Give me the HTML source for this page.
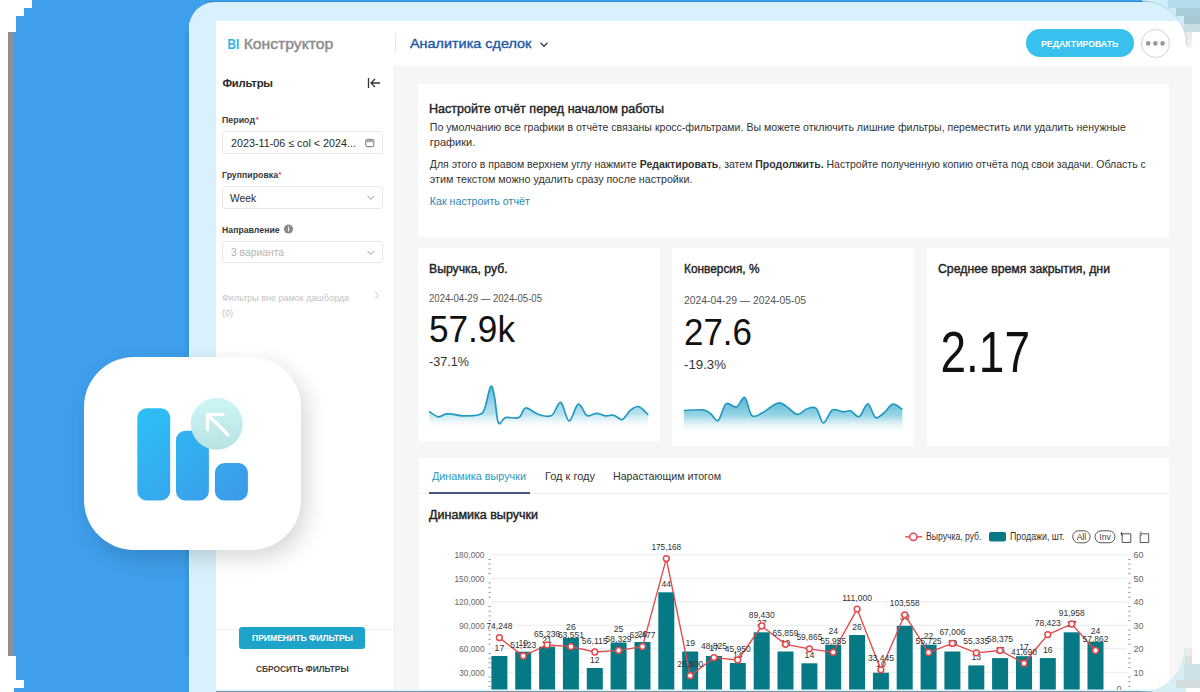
<!DOCTYPE html>
<html><head><meta charset="utf-8"><style>
html,body{margin:0;padding:0;}
body{width:1200px;height:692px;position:relative;overflow:hidden;font-family:"Liberation Sans", sans-serif;}
svg text{font-family:"Liberation Sans", sans-serif;}
</style></head><body>
<div style="position:absolute;left:0px;top:0px;width:1200px;height:692px;background:#ffffff;"></div><div style="position:absolute;left:14px;top:32px;width:176px;height:660px;background:#3f9fec;"></div><div style="position:absolute;left:16px;top:16px;width:174px;height:16px;background:#3f9fec;"></div><div style="position:absolute;left:24px;top:8px;width:166px;height:8px;background:#3f9fec;"></div><div style="position:absolute;left:32px;top:0px;width:158px;height:8px;background:#3f9fec;"></div><div style="position:absolute;left:150px;top:0px;width:120px;height:60px;background:#3f9fec;"></div><div style="position:absolute;left:32px;top:0px;width:1118px;height:2px;background:#3f9fec;"></div><div style="position:absolute;left:205px;top:0.5px;width:945px;height:1.5px;background:#2f8fd0;"></div><div style="position:absolute;left:183px;top:32px;width:6px;height:660px;background:linear-gradient(90deg, rgba(47,143,208,0) , rgba(47,143,208,0.6));"></div><div style="position:absolute;left:8px;top:32px;width:6px;height:624px;background:#8f8f93;"></div><div style="position:absolute;left:0px;top:656px;width:16px;height:24px;background:#ffffff;"></div><div style="position:absolute;left:0px;top:680px;width:24px;height:8px;background:#ffffff;"></div><div style="position:absolute;left:14px;top:688px;width:176px;height:4px;background:#3f9fec;"></div><div style="position:absolute;left:16px;top:656px;width:174px;height:24px;background:#3f9fec;"></div><div style="position:absolute;left:24px;top:680px;width:166px;height:8px;background:#3f9fec;"></div><div id="win" style="position:absolute;left:189px;top:2px;width:1003px;height:690px;background:#d9f1fc;border-radius:26px 0 0 0;overflow:hidden;"><div style="position:absolute;left:0;top:0;width:1px;height:690px;background:#eefaff;"></div><div style="position:absolute;left:27px;top:19px;width:976px;height:671px;background:#ffffff;"></div><div style="position:absolute;left:206px;top:64px;width:797px;height:626px;background:#f6f6f6;"></div><div style="position:absolute;left:205px;top:64px;width:1.2px;height:626px;background:#ececec;"></div><div style="position:absolute;left:206px;top:31px;width:1px;height:20px;background:#e6e6e6;"></div><div style="position:absolute;left:229px;top:82px;width:751px;height:153px;background:#ffffff;"></div><div style="position:absolute;left:229px;top:246px;width:242px;height:193px;background:#ffffff;"></div><div style="position:absolute;left:483px;top:246px;width:242px;height:197.5px;background:#ffffff;"></div><div style="position:absolute;left:738px;top:246px;width:242px;height:198px;background:#ffffff;"></div><div style="position:absolute;left:230px;top:456px;width:750px;height:240px;background:#ffffff;"></div><div style="position:absolute;left:230px;top:491px;width:750px;height:1px;background:#efefef;"></div><div style="position:absolute;left:240px;top:489.7px;width:100.5px;height:2px;background:#4b5680;"></div><div style="position:absolute;left:33px;top:129px;width:161px;height:23px;background:#ffffff;box-sizing:border-box;border:1px solid #e8e8e8;border-radius:3px;"></div><div style="position:absolute;left:33px;top:184px;width:161px;height:23px;background:#ffffff;box-sizing:border-box;border:1px solid #e8e8e8;border-radius:3px;"></div><div style="position:absolute;left:33px;top:239px;width:161px;height:22px;background:#ffffff;box-sizing:border-box;border:1px solid #e8e8e8;border-radius:3px;"></div><div style="position:absolute;left:27px;top:627px;width:177px;height:1px;background:#f3f3f3;"></div><div style="position:absolute;left:50px;top:625px;width:126px;height:22px;background:#1ea4cb;border-radius:3px;"></div><div style="position:absolute;left:837px;top:27px;width:108px;height:28px;background:#38c1ee;border-radius:14px;"></div><div style="position:absolute;left:952px;top:27px;width:29px;height:29px;background:#ffffff;box-sizing:border-box;border:1px solid #d2d2d2;border-radius:50%;"></div><div style="position:absolute;left:27px;top:687px;width:976px;height:2px;background:#e8fbff;"></div><div style="position:absolute;left:27px;top:688.5px;width:976px;height:2px;background:#6d8ea2;"></div></div><div style="position:absolute;left:84px;top:357px;width:217px;height:193px;background:#fff;border-radius:50px;box-shadow:6px 8px 22px rgba(0,0,0,0.16);"></div>
<svg width="1200" height="692" viewBox="0 0 1200 692" style="position:absolute;left:0;top:0;">
<defs><linearGradient id="ib" gradientUnits="userSpaceOnUse" x1="150" y1="400" x2="235" y2="505"><stop offset="0" stop-color="#2cc0f5"/><stop offset="1" stop-color="#3b9ae9"/></linearGradient><linearGradient id="ic" x1="0" y1="0" x2="0" y2="1"><stop offset="0" stop-color="#cdf6f7"/><stop offset="1" stop-color="#b8e2e2"/></linearGradient></defs><rect x="137.3" y="408.2" width="32.9" height="92.4" rx="9.5" fill="url(#ib)"/><rect x="176" y="430.7" width="32.9" height="69.9" rx="9.5" fill="url(#ib)"/><rect x="214.9" y="463.1" width="33" height="37.5" rx="9.5" fill="url(#ib)"/><circle cx="216.7" cy="423.8" r="26" fill="url(#ic)"/><path d="M227.9 434.7 L208 414.8 M207.5 429.5 V414.3 H223" fill="none" stroke="#fff" stroke-width="3.3" stroke-linecap="round"/><text x="227.5" y="48.7" font-size="14" font-weight="700" fill="#2db1e8" textLength="11.7" lengthAdjust="spacingAndGlyphs" >BI</text><text x="243.7" y="48.7" font-size="14.5" font-weight="400" fill="#8d8d8d" textLength="89.6" lengthAdjust="spacingAndGlyphs"  stroke="#8d8d8d" stroke-width="0.45">Конструктор</text><text x="410" y="48.3" font-size="13" font-weight="400" fill="#1b57a2" textLength="121.3" lengthAdjust="spacingAndGlyphs"  stroke="#1b57a2" stroke-width="0.35">Аналитика сделок</text><path d="M540.5 42.6 L544 46.2 L547.5 42.6" fill="none" stroke="#333" stroke-width="1.3"/><text x="1041" y="46.6" font-size="8.8" font-weight="700" fill="#ffffff" textLength="77.4" lengthAdjust="spacing" >РЕДАКТИРОВАТЬ</text><circle cx="1148.2" cy="43.4" r="2.3" fill="#9a9a9a"/><circle cx="1155.4" cy="43.4" r="2.3" fill="#9a9a9a"/><circle cx="1162.6" cy="43.4" r="2.3" fill="#9a9a9a"/><text x="222.4" y="87.2" font-size="11.3" font-weight="700" fill="#2a2a2a" textLength="50.6" lengthAdjust="spacing" >Фильтры</text><path d="M368.5 78 V88 M371.5 83 H380 M375 79 L371 83 L375 87" fill="none" stroke="#333" stroke-width="1.3"/><text x="222" y="122.7" font-size="8.8" font-weight="700" fill="#383838" textLength="33" lengthAdjust="spacing" >Период</text><text x="256" y="122" font-size="7" font-weight="700" fill="#e0364f" >*</text><text x="231" y="147" font-size="11" font-weight="400" fill="#2a2a2a" textLength="125" lengthAdjust="spacingAndGlyphs" >2023-11-06 ≤ col &lt; 2024...</text><rect x="365.8" y="139.4" width="8" height="7.3" rx="1.3" fill="none" stroke="#666" stroke-width="0.95"/><rect x="366" y="139.6" width="7.6" height="2.6" fill="#aaa"/><text x="222" y="177.8" font-size="8.7" font-weight="700" fill="#383838" textLength="56" lengthAdjust="spacing" >Группировка</text><text x="278.5" y="177" font-size="7" font-weight="700" fill="#e0364f" >*</text><text x="230" y="201.8" font-size="11" font-weight="400" fill="#2a2a2a" textLength="26" lengthAdjust="spacingAndGlyphs" >Week</text><path d="M367.5 196 L370.8 199.3 L374.1 196" fill="none" stroke="#999" stroke-width="1"/><text x="222" y="232.5" font-size="8.7" font-weight="700" fill="#383838" textLength="57.6" lengthAdjust="spacing" >Направление</text><circle cx="288.5" cy="229" r="4.6" fill="#8a8a8a"/><rect x="288" y="228" width="1.1" height="3.4" fill="#fff"/><rect x="288" y="226.2" width="1.1" height="1.1" fill="#fff"/><text x="231" y="255.8" font-size="11" font-weight="400" fill="#b5b5b5" textLength="53" lengthAdjust="spacingAndGlyphs" >3 варианта</text><path d="M367.5 251 L370.8 254.3 L374.1 251" fill="none" stroke="#999" stroke-width="1"/><text x="222" y="300.8" font-size="9" font-weight="400" fill="#c4c4c4" textLength="127" lengthAdjust="spacingAndGlyphs" >Фильтры вне рамок дашборда</text><path d="M375 291.8 L378.5 295.3 L375 298.8" fill="none" stroke="#c4c4c4" stroke-width="1"/><text x="222" y="315.5" font-size="9" font-weight="400" fill="#c4c4c4" >(0)</text><text x="252" y="641.2" font-size="8.6" font-weight="700" fill="#ffffff" textLength="101" lengthAdjust="spacing" >ПРИМЕНИТЬ ФИЛЬТРЫ</text><text x="256" y="671.5" font-size="8.4" font-weight="700" fill="#404040" textLength="92.6" lengthAdjust="spacing" >СБРОСИТЬ ФИЛЬТРЫ</text><text x="429" y="112.7" font-size="13" font-weight="400" fill="#222" textLength="235" lengthAdjust="spacingAndGlyphs"  stroke="#222" stroke-width="0.4">Настройте отчёт перед началом работы</text><text x="429.8" y="131" font-size="11" font-weight="400" fill="#333" textLength="696" lengthAdjust="spacingAndGlyphs" >По умолчанию все графики в отчёте связаны кросс-фильтрами. Вы можете отключить лишние фильтры, переместить или удалить ненужные</text><text x="429.8" y="146" font-size="11" font-weight="400" fill="#333" >графики.</text><text x="429.8" y="167.7" font-size="11" font-weight="400" fill="#333" textLength="716" lengthAdjust="spacingAndGlyphs" >Для этого в правом верхнем углу нажмите <tspan font-weight="700">Редактировать</tspan>, затем <tspan font-weight="700">Продолжить.</tspan> Настройте полученную копию отчёта под свои задачи. Область с</text><text x="429.8" y="182.7" font-size="11" font-weight="400" fill="#333" textLength="262.7" lengthAdjust="spacingAndGlyphs" >этим текстом можно удалить сразу после настройки.</text><text x="429.8" y="205" font-size="11" font-weight="400" fill="#2a86b5" textLength="100" lengthAdjust="spacingAndGlyphs" >Как настроить отчёт</text><text x="429" y="273.4" font-size="12.5" font-weight="400" fill="#222" textLength="78.6" lengthAdjust="spacingAndGlyphs"  stroke="#222" stroke-width="0.4">Выручка, руб.</text><text x="429" y="302.2" font-size="10" font-weight="400" fill="#555" textLength="113" lengthAdjust="spacingAndGlyphs" >2024-04-29 — 2024-05-05</text><text x="429" y="341.6" font-size="36" font-weight="400" fill="#111" textLength="86" lengthAdjust="spacingAndGlyphs" >57.9k</text><text x="429" y="366" font-size="13" font-weight="400" fill="#333" textLength="40" lengthAdjust="spacingAndGlyphs" >-37.1%</text><text x="684" y="273.4" font-size="12.5" font-weight="400" fill="#222" textLength="75.5" lengthAdjust="spacingAndGlyphs"  stroke="#222" stroke-width="0.4">Конверсия, %</text><text x="684" y="303.7" font-size="10" font-weight="400" fill="#555" textLength="122" lengthAdjust="spacingAndGlyphs" >2024-04-29 — 2024-05-05</text><text x="684" y="344.7" font-size="36" font-weight="400" fill="#111" textLength="68" lengthAdjust="spacingAndGlyphs" >27.6</text><text x="684" y="369" font-size="13" font-weight="400" fill="#333" textLength="42" lengthAdjust="spacingAndGlyphs" >-19.3%</text><text x="938" y="272.5" font-size="12.5" font-weight="400" fill="#222" textLength="172" lengthAdjust="spacingAndGlyphs"  stroke="#222" stroke-width="0.4">Среднее время закрытия, дни</text><text x="940.5" y="372" font-size="57" font-weight="400" fill="#111" textLength="89.5" lengthAdjust="spacingAndGlyphs" >2.17</text><text x="432" y="480" font-size="11" font-weight="400" fill="#2a9ac4" textLength="94" lengthAdjust="spacingAndGlyphs" >Динамика выручки</text><text x="545" y="480" font-size="11" font-weight="400" fill="#333" textLength="50" lengthAdjust="spacingAndGlyphs" >Год к году</text><text x="613" y="480" font-size="11" font-weight="400" fill="#333" textLength="108" lengthAdjust="spacingAndGlyphs" >Нарастающим итогом</text><text x="429" y="519.3" font-size="12.5" font-weight="400" fill="#222" textLength="109" lengthAdjust="spacingAndGlyphs"  stroke="#222" stroke-width="0.4">Динамика выручки</text><defs><linearGradient id="g1" gradientUnits="userSpaceOnUse" x1="0" y1="386" x2="0" y2="429"><stop offset="0" stop-color="#4fb4d6" stop-opacity="0.9"/><stop offset="0.65" stop-color="#a2d8e8" stop-opacity="0.75"/><stop offset="1" stop-color="#ffffff" stop-opacity="0.05"/></linearGradient><linearGradient id="g2" gradientUnits="userSpaceOnUse" x1="0" y1="397" x2="0" y2="434"><stop offset="0" stop-color="#4aafd2" stop-opacity="0.95"/><stop offset="0.5" stop-color="#86cde0" stop-opacity="0.85"/><stop offset="1" stop-color="#ffffff" stop-opacity="0.05"/></linearGradient></defs><path d="M429.2 411.4 C430.7 412.3 435.6 416.4 438.4 416.8 C441.2 417.2 443.5 414.3 446.1 413.9 C448.7 413.5 451.1 414.0 453.8 414.3 C456.5 414.6 458.2 415.7 462.4 415.8 C466.5 415.9 475.0 415.8 478.7 414.7 C482.4 413.6 482.5 413.7 484.5 409.0 C486.5 404.3 489.0 388.5 490.7 386.5 C492.4 384.5 493.2 390.9 494.5 397.0 C495.8 403.1 496.6 419.5 498.4 422.9 C500.2 426.3 502.1 418.5 505.5 417.6 C508.9 416.7 515.5 419.2 518.9 417.6 C522.2 416.0 522.4 408.6 525.6 408.0 C528.8 407.4 533.8 413.0 538.1 414.3 C542.4 415.6 547.7 417.6 551.5 415.6 C555.3 413.6 557.8 401.5 560.7 402.4 C563.6 403.3 566.2 420.7 569.1 421.0 C572.0 421.3 575.3 405.0 578.3 404.1 C581.3 403.2 584.0 414.1 587.0 415.6 C590.0 417.1 593.6 413.3 596.6 413.3 C599.6 413.3 602.3 415.5 605.2 415.8 C608.1 416.1 610.9 414.7 613.8 415.3 C616.7 415.9 619.7 420.3 622.4 419.5 C625.1 418.7 627.4 412.6 630.1 410.5 C632.8 408.4 635.7 405.9 638.7 406.6 C641.7 407.3 646.7 413.5 648.3 414.9 L648.3 428.5 L429.2 428.5 Z" fill="url(#g1)"/><path d="M429.2 411.4 C430.7 412.3 435.6 416.4 438.4 416.8 C441.2 417.2 443.5 414.3 446.1 413.9 C448.7 413.5 451.1 414.0 453.8 414.3 C456.5 414.6 458.2 415.7 462.4 415.8 C466.5 415.9 475.0 415.8 478.7 414.7 C482.4 413.6 482.5 413.7 484.5 409.0 C486.5 404.3 489.0 388.5 490.7 386.5 C492.4 384.5 493.2 390.9 494.5 397.0 C495.8 403.1 496.6 419.5 498.4 422.9 C500.2 426.3 502.1 418.5 505.5 417.6 C508.9 416.7 515.5 419.2 518.9 417.6 C522.2 416.0 522.4 408.6 525.6 408.0 C528.8 407.4 533.8 413.0 538.1 414.3 C542.4 415.6 547.7 417.6 551.5 415.6 C555.3 413.6 557.8 401.5 560.7 402.4 C563.6 403.3 566.2 420.7 569.1 421.0 C572.0 421.3 575.3 405.0 578.3 404.1 C581.3 403.2 584.0 414.1 587.0 415.6 C590.0 417.1 593.6 413.3 596.6 413.3 C599.6 413.3 602.3 415.5 605.2 415.8 C608.1 416.1 610.9 414.7 613.8 415.3 C616.7 415.9 619.7 420.3 622.4 419.5 C625.1 418.7 627.4 412.6 630.1 410.5 C632.8 408.4 635.7 405.9 638.7 406.6 C641.7 407.3 646.7 413.5 648.3 414.9" fill="none" stroke="#2399c2" stroke-width="1.7" stroke-linejoin="round"/><path d="M683.8 410.5 C687.0 410.4 698.5 409.3 703.0 409.9 C707.5 410.4 708.2 412.0 710.7 413.8 C713.2 415.6 715.8 422.2 718.3 420.5 C720.8 418.8 723.0 406.1 726.0 403.8 C729.0 401.6 733.4 408.1 736.5 407.0 C739.6 405.9 742.2 396.1 744.8 397.5 C747.4 398.9 749.0 413.1 751.9 415.7 C754.8 418.2 757.8 414.9 762.4 412.8 C767.0 410.7 774.0 402.6 779.7 402.8 C785.5 403.1 792.4 413.3 796.9 414.3 C801.4 415.3 803.3 410.0 806.5 409.0 C809.7 408.0 813.3 406.1 816.1 408.4 C818.9 410.7 820.7 422.7 823.4 423.0 C826.1 423.3 829.1 411.9 832.4 410.0 C835.7 408.1 840.0 411.7 843.0 411.8 C846.0 411.9 847.9 410.1 850.6 410.9 C853.3 411.7 856.3 417.8 859.2 416.6 C862.1 415.4 865.1 403.6 867.8 403.8 C870.5 404.0 872.8 416.1 875.5 417.6 C878.2 419.1 881.2 415.0 884.1 412.8 C887.0 410.6 889.8 404.8 892.8 404.2 C895.8 403.6 900.8 408.6 902.4 409.5 L902.4 434 L683.8 434 Z" fill="url(#g2)"/><path d="M683.8 410.5 C687.0 410.4 698.5 409.3 703.0 409.9 C707.5 410.4 708.2 412.0 710.7 413.8 C713.2 415.6 715.8 422.2 718.3 420.5 C720.8 418.8 723.0 406.1 726.0 403.8 C729.0 401.6 733.4 408.1 736.5 407.0 C739.6 405.9 742.2 396.1 744.8 397.5 C747.4 398.9 749.0 413.1 751.9 415.7 C754.8 418.2 757.8 414.9 762.4 412.8 C767.0 410.7 774.0 402.6 779.7 402.8 C785.5 403.1 792.4 413.3 796.9 414.3 C801.4 415.3 803.3 410.0 806.5 409.0 C809.7 408.0 813.3 406.1 816.1 408.4 C818.9 410.7 820.7 422.7 823.4 423.0 C826.1 423.3 829.1 411.9 832.4 410.0 C835.7 408.1 840.0 411.7 843.0 411.8 C846.0 411.9 847.9 410.1 850.6 410.9 C853.3 411.7 856.3 417.8 859.2 416.6 C862.1 415.4 865.1 403.6 867.8 403.8 C870.5 404.0 872.8 416.1 875.5 417.6 C878.2 419.1 881.2 415.0 884.1 412.8 C887.0 410.6 889.8 404.8 892.8 404.2 C895.8 403.6 900.8 408.6 902.4 409.5" fill="none" stroke="#2399c2" stroke-width="1.7" stroke-linejoin="round"/><path d="M905.2 536.8 H922.2" stroke="#e5484b" stroke-width="1.4"/><circle cx="913.3" cy="536.8" r="3.6" fill="#fff" stroke="#e5484b" stroke-width="1.5"/><text x="926" y="539.8" font-size="10" font-weight="400" fill="#333" textLength="55.4" lengthAdjust="spacingAndGlyphs" >Выручка, руб.</text><rect x="989" y="532" width="17" height="9.4" rx="2" fill="#067985"/><text x="1010" y="539.8" font-size="10" font-weight="400" fill="#333" textLength="54.4" lengthAdjust="spacingAndGlyphs" >Продажи, шт.</text><rect x="1072.7" y="530.8" width="17.4" height="12" rx="6" fill="none" stroke="#444" stroke-width="0.9"/><text x="1081.4" y="540.4" font-size="9" font-weight="400" fill="#333" textLength="9.5" lengthAdjust="spacingAndGlyphs" text-anchor="middle" >All</text><rect x="1095" y="530.8" width="20" height="12" rx="6" fill="none" stroke="#444" stroke-width="0.9"/><text x="1105" y="540.4" font-size="9" font-weight="400" fill="#444" textLength="11.5" lengthAdjust="spacingAndGlyphs" text-anchor="middle" >Inv</text><path d="M1122.2 533.8 V542.5 H1130.8 V533.8 H1120.5 M1121.5 532 V535.5" fill="none" stroke="#444" stroke-width="0.9"/><path d="M1141 533.8 H1148.7 V542.5 H1140.2 V535 M1141.6 531.6 L1140 533.8 L1141.6 535.8" fill="none" stroke="#444" stroke-width="0.9"/><path d="M490.5 695.8 H1127" stroke="#e9ebef" stroke-width="1"/><path d="M490.5 672.3 H1127" stroke="#e9ebef" stroke-width="1"/><path d="M490.5 648.8 H1127" stroke="#e9ebef" stroke-width="1"/><path d="M490.5 625.3 H1127" stroke="#e9ebef" stroke-width="1"/><path d="M490.5 601.8 H1127" stroke="#e9ebef" stroke-width="1"/><path d="M490.5 578.3 H1127" stroke="#e9ebef" stroke-width="1"/><path d="M490.5 554.8 H1127" stroke="#e9ebef" stroke-width="1"/><text x="484.5" y="675.5999999999999" font-size="9" font-weight="400" fill="#666" textLength="25.3" lengthAdjust="spacingAndGlyphs" text-anchor="end" >30,000</text><text x="484.5" y="652.0999999999999" font-size="9" font-weight="400" fill="#666" textLength="25.3" lengthAdjust="spacingAndGlyphs" text-anchor="end" >60,000</text><text x="484.5" y="628.5999999999999" font-size="9" font-weight="400" fill="#666" textLength="25.3" lengthAdjust="spacingAndGlyphs" text-anchor="end" >90,000</text><text x="484.5" y="605.0999999999999" font-size="9" font-weight="400" fill="#666" textLength="30" lengthAdjust="spacingAndGlyphs" text-anchor="end" >120,000</text><text x="484.5" y="581.5999999999999" font-size="9" font-weight="400" fill="#666" textLength="30" lengthAdjust="spacingAndGlyphs" text-anchor="end" >150,000</text><text x="484.5" y="558.0999999999999" font-size="9" font-weight="400" fill="#666" textLength="30" lengthAdjust="spacingAndGlyphs" text-anchor="end" >180,000</text><text x="1133.5" y="699.0999999999999" font-size="9" font-weight="400" fill="#666" >0</text><text x="1133.5" y="675.5999999999999" font-size="9" font-weight="400" fill="#666" >10</text><text x="1133.5" y="652.0999999999999" font-size="9" font-weight="400" fill="#666" >20</text><text x="1133.5" y="628.5999999999999" font-size="9" font-weight="400" fill="#666" >30</text><text x="1133.5" y="605.0999999999999" font-size="9" font-weight="400" fill="#666" >40</text><text x="1133.5" y="581.5999999999999" font-size="9" font-weight="400" fill="#666" >50</text><text x="1133.5" y="558.0999999999999" font-size="9" font-weight="400" fill="#666" >60</text><text x="1116.5" y="691.5" font-size="9" font-weight="400" fill="#666" >0</text><rect x="488.6" y="559.0" width="2" height="1" fill="#8a8a8a"/><rect x="1128.4" y="559.0" width="2" height="1" fill="#8a8a8a"/><rect x="488.6" y="563.7" width="2" height="1" fill="#8a8a8a"/><rect x="1128.4" y="563.7" width="2" height="1" fill="#8a8a8a"/><rect x="488.6" y="568.4" width="2" height="1" fill="#8a8a8a"/><rect x="1128.4" y="568.4" width="2" height="1" fill="#8a8a8a"/><rect x="488.6" y="573.1" width="2" height="1" fill="#8a8a8a"/><rect x="1128.4" y="573.1" width="2" height="1" fill="#8a8a8a"/><rect x="488.6" y="582.5" width="2" height="1" fill="#8a8a8a"/><rect x="1128.4" y="582.5" width="2" height="1" fill="#8a8a8a"/><rect x="488.6" y="587.2" width="2" height="1" fill="#8a8a8a"/><rect x="1128.4" y="587.2" width="2" height="1" fill="#8a8a8a"/><rect x="488.6" y="591.9" width="2" height="1" fill="#8a8a8a"/><rect x="1128.4" y="591.9" width="2" height="1" fill="#8a8a8a"/><rect x="488.6" y="596.6" width="2" height="1" fill="#8a8a8a"/><rect x="1128.4" y="596.6" width="2" height="1" fill="#8a8a8a"/><rect x="488.6" y="606.0" width="2" height="1" fill="#8a8a8a"/><rect x="1128.4" y="606.0" width="2" height="1" fill="#8a8a8a"/><rect x="488.6" y="610.7" width="2" height="1" fill="#8a8a8a"/><rect x="1128.4" y="610.7" width="2" height="1" fill="#8a8a8a"/><rect x="488.6" y="615.4" width="2" height="1" fill="#8a8a8a"/><rect x="1128.4" y="615.4" width="2" height="1" fill="#8a8a8a"/><rect x="488.6" y="620.1" width="2" height="1" fill="#8a8a8a"/><rect x="1128.4" y="620.1" width="2" height="1" fill="#8a8a8a"/><rect x="488.6" y="629.5" width="2" height="1" fill="#8a8a8a"/><rect x="1128.4" y="629.5" width="2" height="1" fill="#8a8a8a"/><rect x="488.6" y="634.2" width="2" height="1" fill="#8a8a8a"/><rect x="1128.4" y="634.2" width="2" height="1" fill="#8a8a8a"/><rect x="488.6" y="638.9" width="2" height="1" fill="#8a8a8a"/><rect x="1128.4" y="638.9" width="2" height="1" fill="#8a8a8a"/><rect x="488.6" y="643.6" width="2" height="1" fill="#8a8a8a"/><rect x="1128.4" y="643.6" width="2" height="1" fill="#8a8a8a"/><rect x="488.6" y="653.0" width="2" height="1" fill="#8a8a8a"/><rect x="1128.4" y="653.0" width="2" height="1" fill="#8a8a8a"/><rect x="488.6" y="657.7" width="2" height="1" fill="#8a8a8a"/><rect x="1128.4" y="657.7" width="2" height="1" fill="#8a8a8a"/><rect x="488.6" y="662.4" width="2" height="1" fill="#8a8a8a"/><rect x="1128.4" y="662.4" width="2" height="1" fill="#8a8a8a"/><rect x="488.6" y="667.1" width="2" height="1" fill="#8a8a8a"/><rect x="1128.4" y="667.1" width="2" height="1" fill="#8a8a8a"/><rect x="488.6" y="676.5" width="2" height="1" fill="#8a8a8a"/><rect x="1128.4" y="676.5" width="2" height="1" fill="#8a8a8a"/><rect x="488.6" y="681.2" width="2" height="1" fill="#8a8a8a"/><rect x="1128.4" y="681.2" width="2" height="1" fill="#8a8a8a"/><rect x="488.6" y="685.9" width="2" height="1" fill="#8a8a8a"/><rect x="1128.4" y="685.9" width="2" height="1" fill="#8a8a8a"/><rect x="488.6" y="690.6" width="2" height="1" fill="#8a8a8a"/><rect x="1128.4" y="690.6" width="2" height="1" fill="#8a8a8a"/><rect x="491.4" y="656" width="16" height="33.7" fill="#067985"/><rect x="515.2" y="651.7" width="16" height="38.0" fill="#067985"/><rect x="539.1" y="646.7" width="16" height="43.0" fill="#067985"/><rect x="562.9" y="638" width="16" height="51.7" fill="#067985"/><rect x="586.8" y="668" width="16" height="21.7" fill="#067985"/><rect x="610.6" y="642.5" width="16" height="47.2" fill="#067985"/><rect x="634.5" y="642" width="16" height="47.7" fill="#067985"/><rect x="658.3" y="592.3" width="16" height="97.4" fill="#067985"/><rect x="682.2" y="651.5" width="16" height="38.2" fill="#067985"/><rect x="706.0" y="656" width="16" height="33.7" fill="#067985"/><rect x="729.8" y="663" width="16" height="26.7" fill="#067985"/><rect x="753.7" y="632.3" width="16" height="57.4" fill="#067985"/><rect x="777.5" y="651.5" width="16" height="38.2" fill="#067985"/><rect x="801.4" y="663.3" width="16" height="26.4" fill="#067985"/><rect x="825.2" y="644.7" width="16" height="45.0" fill="#067985"/><rect x="849.1" y="635" width="16" height="54.7" fill="#067985"/><rect x="872.9" y="672.7" width="16" height="17.0" fill="#067985"/><rect x="896.7" y="625.8" width="16" height="63.9" fill="#067985"/><rect x="920.6" y="644.7" width="16" height="45.0" fill="#067985"/><rect x="944.4" y="651.5" width="16" height="38.2" fill="#067985"/><rect x="968.3" y="665.4" width="16" height="24.3" fill="#067985"/><rect x="992.1" y="658.1" width="16" height="31.6" fill="#067985"/><rect x="1016.0" y="656.2" width="16" height="33.5" fill="#067985"/><rect x="1039.8" y="658.1" width="16" height="31.6" fill="#067985"/><rect x="1063.7" y="632.3" width="16" height="57.4" fill="#067985"/><rect x="1087.5" y="641.8" width="16" height="47.9" fill="#067985"/><text x="499.4" y="650.7" font-size="9" font-weight="400" fill="#333" textLength="9.6" lengthAdjust="spacingAndGlyphs" text-anchor="middle" >17</text><text x="523.2" y="646.4" font-size="9" font-weight="400" fill="#333" textLength="9.6" lengthAdjust="spacingAndGlyphs" text-anchor="middle" >19</text><text x="547.1" y="642.7" font-size="9" font-weight="400" fill="#333" textLength="9.6" lengthAdjust="spacingAndGlyphs" text-anchor="middle" >21</text><text x="570.9" y="629.6" font-size="9" font-weight="400" fill="#333" textLength="9.6" lengthAdjust="spacingAndGlyphs" text-anchor="middle" >26</text><text x="594.8" y="662.7" font-size="9" font-weight="400" fill="#333" textLength="9.6" lengthAdjust="spacingAndGlyphs" text-anchor="middle" >12</text><text x="618.6" y="632" font-size="9" font-weight="400" fill="#333" textLength="9.6" lengthAdjust="spacingAndGlyphs" text-anchor="middle" >25</text><text x="642.5" y="636.7" font-size="9" font-weight="400" fill="#333" textLength="9.6" lengthAdjust="spacingAndGlyphs" text-anchor="middle" >26</text><text x="666.3" y="587.0" font-size="9" font-weight="400" fill="#333" textLength="9.6" lengthAdjust="spacingAndGlyphs" text-anchor="middle" >44</text><text x="690.2" y="646.2" font-size="9" font-weight="400" fill="#333" textLength="9.6" lengthAdjust="spacingAndGlyphs" text-anchor="middle" >19</text><text x="714.0" y="650.7" font-size="9" font-weight="400" fill="#333" textLength="9.6" lengthAdjust="spacingAndGlyphs" text-anchor="middle" >17</text><text x="737.8" y="657.7" font-size="9" font-weight="400" fill="#333" textLength="9.6" lengthAdjust="spacingAndGlyphs" text-anchor="middle" >14</text><text x="761.7" y="626" font-size="9" font-weight="400" fill="#333" textLength="9.6" lengthAdjust="spacingAndGlyphs" text-anchor="middle" >27</text><text x="785.5" y="646.2" font-size="9" font-weight="400" fill="#333" textLength="9.6" lengthAdjust="spacingAndGlyphs" text-anchor="middle" >19</text><text x="809.4" y="658.0" font-size="9" font-weight="400" fill="#333" textLength="9.6" lengthAdjust="spacingAndGlyphs" text-anchor="middle" >14</text><text x="833.2" y="634.2" font-size="9" font-weight="400" fill="#333" textLength="9.6" lengthAdjust="spacingAndGlyphs" text-anchor="middle" >24</text><text x="857.1" y="629.7" font-size="9" font-weight="400" fill="#333" textLength="9.6" lengthAdjust="spacingAndGlyphs" text-anchor="middle" >26</text><text x="880.9" y="667.4" font-size="9" font-weight="400" fill="#333" textLength="9.6" lengthAdjust="spacingAndGlyphs" text-anchor="middle" >10</text><text x="904.7" y="619.6" font-size="9" font-weight="400" fill="#333" textLength="9.6" lengthAdjust="spacingAndGlyphs" text-anchor="middle" >30</text><text x="928.6" y="639.4" font-size="9" font-weight="400" fill="#333" textLength="9.6" lengthAdjust="spacingAndGlyphs" text-anchor="middle" >22</text><text x="952.4" y="646.2" font-size="9" font-weight="400" fill="#333" textLength="9.6" lengthAdjust="spacingAndGlyphs" text-anchor="middle" >19</text><text x="976.3" y="660.1" font-size="9" font-weight="400" fill="#333" textLength="9.6" lengthAdjust="spacingAndGlyphs" text-anchor="middle" >13</text><text x="1000.1" y="652.8" font-size="9" font-weight="400" fill="#333" textLength="9.6" lengthAdjust="spacingAndGlyphs" text-anchor="middle" >16</text><text x="1024.0" y="650" font-size="9" font-weight="400" fill="#333" textLength="9.6" lengthAdjust="spacingAndGlyphs" text-anchor="middle" >17</text><text x="1047.8" y="652.8" font-size="9" font-weight="400" fill="#333" textLength="9.6" lengthAdjust="spacingAndGlyphs" text-anchor="middle" >16</text><text x="1071.7" y="627.0" font-size="9" font-weight="400" fill="#333" textLength="9.6" lengthAdjust="spacingAndGlyphs" text-anchor="middle" >27</text><text x="1095.5" y="634.2" font-size="9" font-weight="400" fill="#333" textLength="9.6" lengthAdjust="spacingAndGlyphs" text-anchor="middle" >24</text><polyline points="499.4,637.7 523.2,656 547.1,645 570.9,646.7 594.8,652 618.6,650.4 642.5,646.6 666.3,558.6 690.2,675.7 714.0,657.6 737.8,660 761.7,626 785.5,644.3 809.4,648.8 833.2,652.3 857.1,609.1 880.9,669.8 904.7,614.8 928.6,652.5 952.4,643.4 976.3,652.8 1000.1,650.5 1024.0,663.3 1047.8,634.6 1071.7,624 1095.5,650.5" fill="none" stroke="#e5484b" stroke-width="1.35"/><circle cx="499.4" cy="637.7" r="2.9" fill="#fff" stroke="#e5484b" stroke-width="1.5"/><circle cx="523.2" cy="656" r="2.9" fill="#fff" stroke="#e5484b" stroke-width="1.5"/><circle cx="547.1" cy="645" r="2.9" fill="#fff" stroke="#e5484b" stroke-width="1.5"/><circle cx="570.9" cy="646.7" r="2.9" fill="#fff" stroke="#e5484b" stroke-width="1.5"/><circle cx="594.8" cy="652" r="2.9" fill="#fff" stroke="#e5484b" stroke-width="1.5"/><circle cx="618.6" cy="650.4" r="2.9" fill="#fff" stroke="#e5484b" stroke-width="1.5"/><circle cx="642.5" cy="646.6" r="2.9" fill="#fff" stroke="#e5484b" stroke-width="1.5"/><circle cx="666.3" cy="558.6" r="2.9" fill="#fff" stroke="#e5484b" stroke-width="1.5"/><circle cx="690.2" cy="675.7" r="2.9" fill="#fff" stroke="#e5484b" stroke-width="1.5"/><circle cx="714.0" cy="657.6" r="2.9" fill="#fff" stroke="#e5484b" stroke-width="1.5"/><circle cx="737.8" cy="660" r="2.9" fill="#fff" stroke="#e5484b" stroke-width="1.5"/><circle cx="761.7" cy="626" r="2.9" fill="#fff" stroke="#e5484b" stroke-width="1.5"/><circle cx="785.5" cy="644.3" r="2.9" fill="#fff" stroke="#e5484b" stroke-width="1.5"/><circle cx="809.4" cy="648.8" r="2.9" fill="#fff" stroke="#e5484b" stroke-width="1.5"/><circle cx="833.2" cy="652.3" r="2.9" fill="#fff" stroke="#e5484b" stroke-width="1.5"/><circle cx="857.1" cy="609.1" r="2.9" fill="#fff" stroke="#e5484b" stroke-width="1.5"/><circle cx="880.9" cy="669.8" r="2.9" fill="#fff" stroke="#e5484b" stroke-width="1.5"/><circle cx="904.7" cy="614.8" r="2.9" fill="#fff" stroke="#e5484b" stroke-width="1.5"/><circle cx="928.6" cy="652.5" r="2.9" fill="#fff" stroke="#e5484b" stroke-width="1.5"/><circle cx="952.4" cy="643.4" r="2.9" fill="#fff" stroke="#e5484b" stroke-width="1.5"/><circle cx="976.3" cy="652.8" r="2.9" fill="#fff" stroke="#e5484b" stroke-width="1.5"/><circle cx="1000.1" cy="650.5" r="2.9" fill="#fff" stroke="#e5484b" stroke-width="1.5"/><circle cx="1024.0" cy="663.3" r="2.9" fill="#fff" stroke="#e5484b" stroke-width="1.5"/><circle cx="1047.8" cy="634.6" r="2.9" fill="#fff" stroke="#e5484b" stroke-width="1.5"/><circle cx="1071.7" cy="624" r="2.9" fill="#fff" stroke="#e5484b" stroke-width="1.5"/><circle cx="1095.5" cy="650.5" r="2.9" fill="#fff" stroke="#e5484b" stroke-width="1.5"/><text x="499.4" y="629.3" font-size="9" font-weight="400" fill="#333" textLength="26" lengthAdjust="spacingAndGlyphs" text-anchor="middle" >74,248</text><text x="523.2" y="647.6" font-size="9" font-weight="400" fill="#333" textLength="26" lengthAdjust="spacingAndGlyphs" text-anchor="middle" >51,123</text><text x="547.1" y="636.6" font-size="9" font-weight="400" fill="#333" textLength="26" lengthAdjust="spacingAndGlyphs" text-anchor="middle" >65,236</text><text x="570.9" y="638.3" font-size="9" font-weight="400" fill="#333" textLength="26" lengthAdjust="spacingAndGlyphs" text-anchor="middle" >63,551</text><text x="594.8" y="643.6" font-size="9" font-weight="400" fill="#333" textLength="26" lengthAdjust="spacingAndGlyphs" text-anchor="middle" >56,115</text><text x="618.6" y="642.0" font-size="9" font-weight="400" fill="#333" textLength="26" lengthAdjust="spacingAndGlyphs" text-anchor="middle" >58,329</text><text x="642.5" y="638.2" font-size="9" font-weight="400" fill="#333" textLength="26" lengthAdjust="spacingAndGlyphs" text-anchor="middle" >62,477</text><text x="666.3" y="550.2" font-size="9" font-weight="400" fill="#333" textLength="29.8" lengthAdjust="spacingAndGlyphs" text-anchor="middle" >175,168</text><text x="690.2" y="667.3" font-size="9" font-weight="400" fill="#333" textLength="26" lengthAdjust="spacingAndGlyphs" text-anchor="middle" >26,800</text><text x="714.0" y="649.2" font-size="9" font-weight="400" fill="#333" textLength="26" lengthAdjust="spacingAndGlyphs" text-anchor="middle" >48,825</text><text x="737.8" y="651.6" font-size="9" font-weight="400" fill="#333" textLength="26" lengthAdjust="spacingAndGlyphs" text-anchor="middle" >45,950</text><text x="761.7" y="617.6" font-size="9" font-weight="400" fill="#333" textLength="26" lengthAdjust="spacingAndGlyphs" text-anchor="middle" >89,430</text><text x="785.5" y="635.9" font-size="9" font-weight="400" fill="#333" textLength="26" lengthAdjust="spacingAndGlyphs" text-anchor="middle" >65,859</text><text x="809.4" y="640.4" font-size="9" font-weight="400" fill="#333" textLength="26" lengthAdjust="spacingAndGlyphs" text-anchor="middle" >59,865</text><text x="833.2" y="643.9" font-size="9" font-weight="400" fill="#333" textLength="26" lengthAdjust="spacingAndGlyphs" text-anchor="middle" >55,955</text><text x="857.1" y="600.7" font-size="9" font-weight="400" fill="#333" textLength="29.8" lengthAdjust="spacingAndGlyphs" text-anchor="middle" >111,000</text><text x="880.9" y="661.4" font-size="9" font-weight="400" fill="#333" textLength="26" lengthAdjust="spacingAndGlyphs" text-anchor="middle" >33,445</text><text x="904.7" y="606.4" font-size="9" font-weight="400" fill="#333" textLength="29.8" lengthAdjust="spacingAndGlyphs" text-anchor="middle" >103,558</text><text x="928.6" y="644.1" font-size="9" font-weight="400" fill="#333" textLength="26" lengthAdjust="spacingAndGlyphs" text-anchor="middle" >55,725</text><text x="952.4" y="635.0" font-size="9" font-weight="400" fill="#333" textLength="26" lengthAdjust="spacingAndGlyphs" text-anchor="middle" >67,006</text><text x="976.3" y="644.4" font-size="9" font-weight="400" fill="#333" textLength="26" lengthAdjust="spacingAndGlyphs" text-anchor="middle" >55,335</text><text x="1000.1" y="642.1" font-size="9" font-weight="400" fill="#333" textLength="26" lengthAdjust="spacingAndGlyphs" text-anchor="middle" >58,375</text><text x="1024.0" y="654.9" font-size="9" font-weight="400" fill="#333" textLength="26" lengthAdjust="spacingAndGlyphs" text-anchor="middle" >41,690</text><text x="1047.8" y="626.2" font-size="9" font-weight="400" fill="#333" textLength="26" lengthAdjust="spacingAndGlyphs" text-anchor="middle" >78,423</text><text x="1071.7" y="615.6" font-size="9" font-weight="400" fill="#333" textLength="26" lengthAdjust="spacingAndGlyphs" text-anchor="middle" >91,958</text><text x="1095.5" y="642.1" font-size="9" font-weight="400" fill="#333" textLength="26" lengthAdjust="spacingAndGlyphs" text-anchor="middle" >57,862</text><rect x="216" y="689.7" width="930" height="1.4" fill="#dff6fc"/><rect x="216" y="691" width="930" height="1" fill="#7893a3"/><defs><clipPath id="ctr"><path d="M1142 0 H1200 V60 H1187 V46 A45 45 0 0 0 1142 1 Z"/></clipPath><clipPath id="cbr"><path d="M1185 648 H1200 V692 H1140 V693 A45 45 0 0 0 1185 648 Z"/></clipPath></defs><g clip-path="url(#ctr)"><rect x="1140" y="0" width="60" height="60" fill="#ffffff"/><rect x="1140" y="0" width="52" height="46" fill="#cdeefa"/><rect x="1168" y="0" width="32" height="8" fill="#b3dbea"/><rect x="1176" y="8" width="24" height="8" fill="#a9ceda"/><rect x="1184" y="16" width="16" height="8" fill="#a8c8d4"/><rect x="1184" y="24" width="16" height="8" fill="#c9dde5"/><rect x="1184" y="32" width="8" height="8" fill="#e8eaec"/><rect x="1184" y="40" width="8" height="8" fill="#f3f3f3"/><rect x="1192" y="32" width="8" height="28" fill="#ffffff"/></g><path d="M1142 1 A45 45 0 0 1 1187 46" fill="none" stroke="#a9c9d6" stroke-width="0.7"/><g clip-path="url(#cbr)"><rect x="1140" y="648" width="60" height="44" fill="#d6eef6"/><rect x="1185" y="648" width="15" height="16" fill="#ffffff"/><rect x="1185" y="648" width="7" height="8" fill="#e9e9e9"/><rect x="1185" y="656" width="7" height="8" fill="#dedede"/><rect x="1184" y="664" width="16" height="16" fill="#cde0e6"/><rect x="1176" y="680" width="24" height="8" fill="#d3dddf"/><rect x="1186" y="688" width="14" height="4" fill="#ffffff"/></g><path d="M1140 692.5 A45 45 0 0 0 1185 648" fill="none" stroke="#c8e6ee" stroke-width="0.7"/>
</svg>
</body></html>
